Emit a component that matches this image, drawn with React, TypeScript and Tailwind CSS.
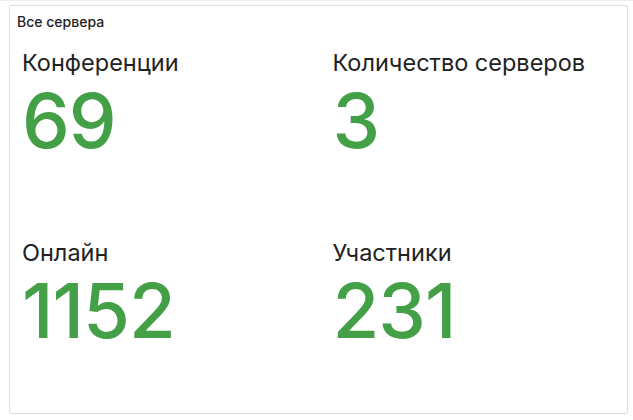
import React from "react";

const stats = [
  { label: "Конференции", value: "69" },
  { label: "Количество серверов", value: "3" },
  { label: "Онлайн", value: "1152" },
  { label: "Участники", value: "231" },
];

export default function App() {
  return (
    <div
      className="w-[633px] h-[420px] bg-white border-t border-[#eeeeee] overflow-hidden"
      style={{ fontFamily: "Inter, 'Noto Sans', sans-serif" }}
    >
      <div className="ml-[9px] mt-[4px] w-[619px] h-[409px] border border-[#dedede] rounded-[2px] flex flex-col">
        <div className="pt-[8px] px-[7px] text-[14px] leading-[16px] font-medium text-[#222222]">
          Все сервера
        </div>
        <div className="mt-[20px] grid grid-cols-2">
          {stats.map((s, i) => (
            <div key={s.label} className={"h-[190px] " + (i % 2 === 0 ? "pl-[12px]" : "pl-[14px]")}>
              <div className="text-[23.5px] leading-[26px] text-[#222222]">{s.label}</div>
              <div className="mt-[12px] text-[76px] leading-[64px] font-medium tracking-[-1px] text-[#43a047]">
                {s.value}
              </div>
            </div>
          ))}
        </div>
      </div>
    </div>
  );
}
